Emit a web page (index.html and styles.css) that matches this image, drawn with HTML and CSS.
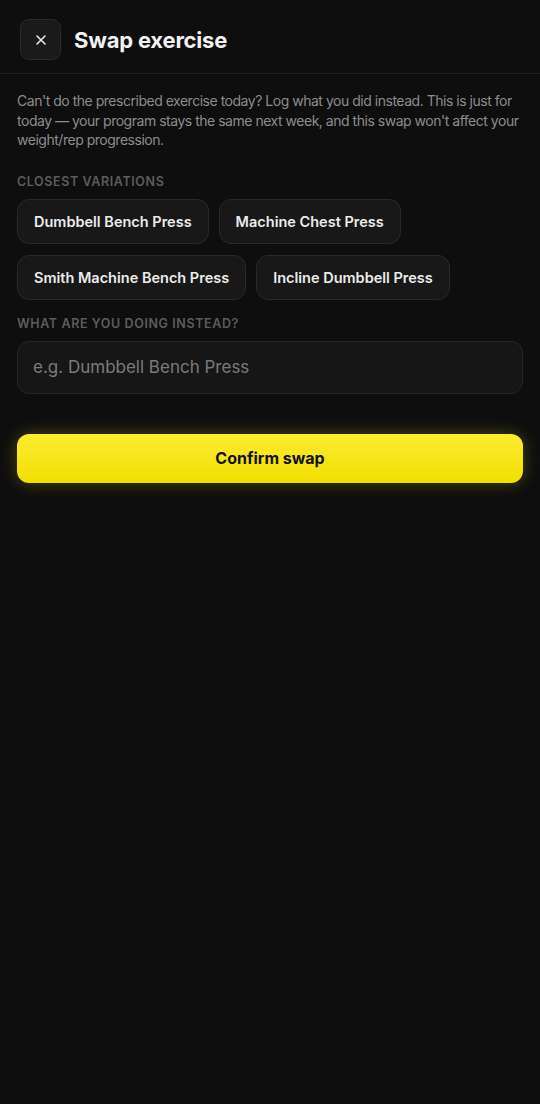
FILE: index.html
```html
<!DOCTYPE html>
<html lang="en">
<head>
    <meta charset="UTF-8">
    <meta name="viewport" content="width=device-width, initial-scale=1.0">
    <title>Swap exercise</title>
    <link rel="stylesheet" href="styles.css">
</head>
<body>
    <header class="top-bar">
        <button class="close-btn" aria-label="Close">
            <svg width="12" height="12" viewBox="0 0 12 12"><path d="M2 2L10 10M10 2L2 10" stroke="#e8e8e8" stroke-width="1.6" stroke-linecap="round"/></svg>
        </button>
        <h1 class="title">Swap exercise</h1>
    </header>

    <main class="content">
        <p class="intro">Can't do the prescribed exercise today? Log what you did instead. This is just for today — your program stays the same next week, and this swap won't affect your weight/rep progression.</p>

        <div class="section-label">CLOSEST VARIATIONS</div>
        <div class="chips">
            <button class="chip">Dumbbell Bench Press</button>
            <button class="chip">Machine Chest Press</button>
            <button class="chip">Smith Machine Bench Press</button>
            <button class="chip">Incline Dumbbell Press</button>
        </div>

        <div class="section-label">WHAT ARE YOU DOING INSTEAD?</div>
        <input type="text" class="swap-input" placeholder="e.g. Dumbbell Bench Press">

        <button class="confirm-btn">Confirm swap</button>
    </main>
</body>
</html>
```

FILE: styles.css
```css
body {
    margin: 0;
    padding: 0;
    background-color: #0e0e0e;
    min-height: 100vh;
    font-family: Inter, "Noto Sans", sans-serif;
    color: #f0f0f0;
}

.top-bar {
    display: flex;
    align-items: center;
    gap: 13px;
    padding: 19px 20px 13px;
    border-bottom: 1px solid #1f1f1f;
}

.close-btn {
    width: 41px;
    height: 41px;
    display: flex;
    align-items: center;
    justify-content: center;
    background: #1a1a1a;
    border: 1px solid #2a2a2a;
    border-radius: 9px;
    padding: 0;
    cursor: pointer;
}

.title {
    margin: 0;
    font-size: 22px;
    font-weight: 700;
    letter-spacing: -0.2px;
    color: #f2f2f2;
}

.content {
    padding: 17px 17px;
}

.intro {
    margin: 0 0 24px;
    font-size: 14px;
    line-height: 19.6px;
    color: #8c8c8c;
    letter-spacing: -0.48px;
}

.section-label {
    font-size: 12.5px;
    font-weight: 600;
    letter-spacing: 0.6px;
    color: #5c5c5c;
    margin-bottom: 10px;
}

.chips {
    display: flex;
    flex-wrap: wrap;
    gap: 11px 10px;
    margin-bottom: 16px;
}

.chip {
    height: 45px;
    padding: 0 16px;
    background: #181818;
    border: 1px solid #292929;
    border-radius: 12px;
    font-family: inherit;
    font-size: 14.5px;
    font-weight: 600;
    color: #ececec;
    cursor: pointer;
}

.swap-input {
    display: block;
    width: 100%;
    height: 53px;
    box-sizing: border-box;
    padding: 0 15px;
    background: #161616;
    border: 1px solid #262626;
    border-radius: 12px;
    font-family: inherit;
    font-size: 17px;
    color: #eee;
    outline: none;
}

.swap-input::placeholder {
    color: #7a7a7a;
}

.confirm-btn {
    display: block;
    width: 100%;
    height: 49px;
    margin-top: 40px;
    border: none;
    border-radius: 12px;
    background: linear-gradient(180deg, #fbec33 0%, #f2df00 100%);
    box-shadow: 0 0 16px rgba(242, 223, 0, 0.28);
    font-family: inherit;
    font-size: 16px;
    font-weight: 700;
    color: #111;
    cursor: pointer;
}
```
